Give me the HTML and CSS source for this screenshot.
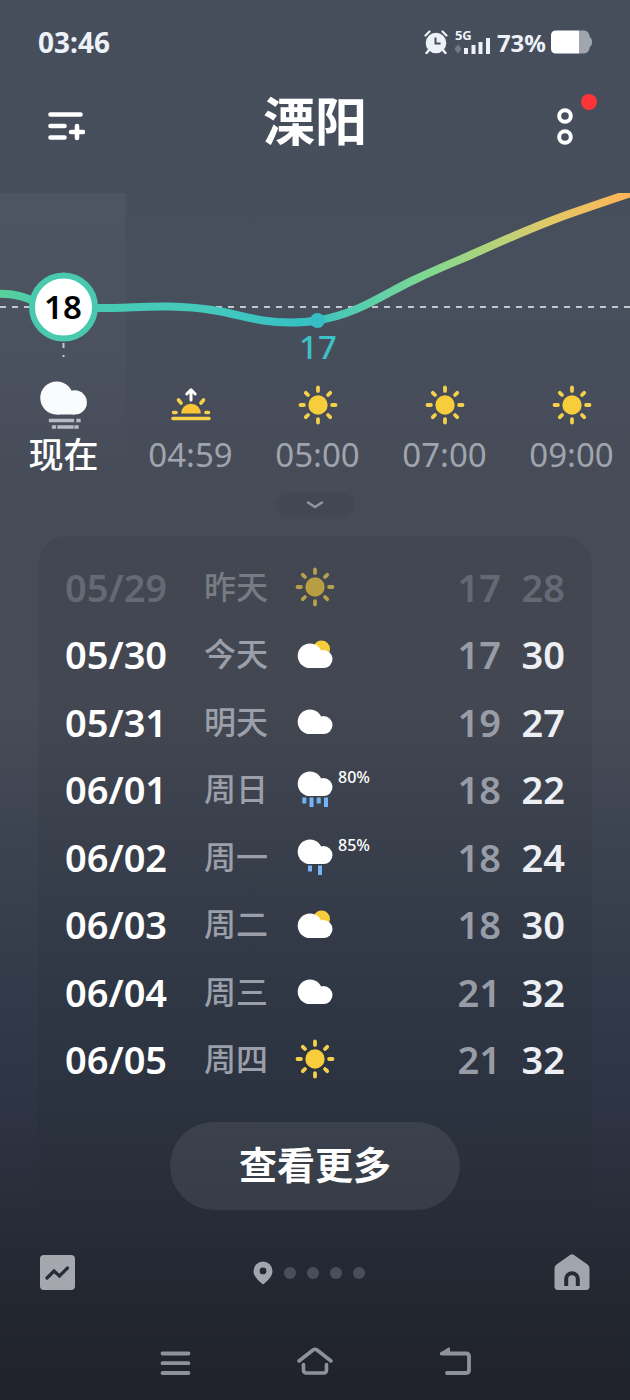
FILE: index.html
```html
<!DOCTYPE html>
<html lang="zh-CN">
<head>
<meta charset="utf-8">
<meta name="viewport" content="width=device-width, initial-scale=1">
<title>溧阳</title>
<link rel="stylesheet" href="styles.css">
</head>
<body>
<svg class="defs" aria-hidden="true">
  <symbol id="cloud" viewBox="0 0 36 25" overflow="visible">
    <circle cx="12.500" cy="12.300" r="12.300"/>
    <circle cx="26" cy="15.600" r="9"/>
    <path d="M12.500 10H24V12L26 24.600H12.500z"/>
  </symbol>
  <symbol id="sun" viewBox="0 0 40 40">
    <circle cx="20" cy="20" r="9.700" fill="#f7cd3c"/>
    <g stroke="#f5d04a" stroke-width="3.800" stroke-linecap="round">
      <path d="M20 2.500v3.400M20 34.100v3.400M2.500 20h3.400M34.100 20h3.400M7.800 7.800l2.200 2.200M30 30l2.200 2.200M7.800 32.200l2.200-2.200M30 10l2.200-2.200"/>
    </g>
  </symbol>
</svg>

<div class="screen">
  <div class="status">
    <time class="clock">03:46</time>
    <div class="indicators">
      <svg width="24" height="24" viewBox="0 0 24 24">
        <circle cx="12" cy="13" r="10.300" fill="#edf1f8"/>
        <path d="M1.500 5.500l4-4M22.500 5.500l-4-4" stroke="#edf1f8" stroke-width="2.200" stroke-linecap="round"/>
        <path d="M5 20l-2.500 3M19 20l2.500 3" stroke="#edf1f8" stroke-width="2.500" stroke-linecap="round"/>
        <path d="M11.500 7.500v6h5" fill="none" stroke="#464e5c" stroke-width="2"/>
      </svg>
      <div class="cell">
        <span class="net">5G</span>
        <svg width="36" height="24" viewBox="0 0 36 24">
          <path d="M0 18l3-3.500 3 3.500v2l-3 3.500-3-3.500z" fill="#747b88"/>
          <path d="M9 18h4v6H9zM16.500 15h4v9h-4zM23.500 12h4v12h-4zM31 8h4v16h-4z" fill="#edf1f8"/>
        </svg>
      </div>
      <span class="percent">73%</span>
      <svg width="42" height="24" viewBox="0 0 42 24">
        <path d="M28 .5h5q5 0 6 7 2 .5 2 4.500t-2 4.500q-1 7-6 7h-5z" fill="#a1a6ae"/>
        <path d="M5 .5h23v23H5q-5 0-5-5v-13q0-5 5-5z" fill="#fff"/>
      </svg>
    </div>
  </div>

  <header class="header">
    <button class="icon-button" type="button" aria-label="城市管理">
      <svg width="40" height="32" viewBox="0 0 40 32">
        <path d="M5.500 3.500h30M5.500 15h14M5.500 26.500h14M26 21h12M32 15v12" fill="none" stroke="#fff" stroke-width="4.600" stroke-linecap="round"/>
      </svg>
    </button>
    <h1 class="city">溧阳</h1>
    <button class="icon-button more" type="button" aria-label="更多选项">
      <svg width="18" height="40" viewBox="0 0 18 40" fill="none" stroke="#fff" stroke-width="4">
        <circle cx="9" cy="9" r="5.800"/><circle cx="9" cy="30" r="5.800"/>
      </svg>
      <span class="dot"></span>
    </button>
  </header>

  <main>
    <section class="hourly" aria-label="逐小时预报">
      <svg class="chart" viewBox="0 0 630 176" preserveAspectRatio="xMinYMin slice">
        <defs>
          <linearGradient id="temp" gradientUnits="userSpaceOnUse" x1="0" y1="0" x2="630" y2="0">
            <stop offset="0" stop-color="#58d09a"/>
            <stop offset=".08" stop-color="#49cbb2"/>
            <stop offset=".33" stop-color="#44c9bb"/>
            <stop offset=".48" stop-color="#35c0c4"/>
            <stop offset=".6" stop-color="#61d1a7"/>
            <stop offset=".68" stop-color="#80d890"/>
            <stop offset=".8" stop-color="#bdd277"/>
            <stop offset=".88" stop-color="#e4c866"/>
            <stop offset="1" stop-color="#ffb357"/>
          </linearGradient>
        </defs>
        <path class="dash" d="M0 114H630"/>
        <path class="dash" d="M63.500 150v5M63.500 162v2"/>
        <path d="M-5 101C15 100 25 104 38 110C60 118 80 115 97 115C130 115 140 113 170 113.500C235 115 245 129.500 290 129.500C300 129.500 308 129 317 127.500C359 121 385 100 415 86.500C435 77 445 73 465 64.500C482 57 495 51 515 42.500C535 34 550 28 565 22.500C595 12 610 7 640 -3" fill="none" stroke="url(#temp)" stroke-width="8"/>
        <circle cx="317.500" cy="127.500" r="7.500" fill="#35bfc5"/>
        <circle cx="63.500" cy="114" r="31.500" fill="#fff" stroke="#49c9ae" stroke-width="6"/>
        <text class="now-temp" x="63" y="126">18</text>
        <text class="low-temp" x="318" y="166">17</text>
      </svg>
      <ol class="hours">
        <li class="hour now">
          <svg width="48" height="48" viewBox="0 0 48 48">
            <g fill="#fafbfc" transform="translate(0 .5) scale(1.340)"><use href="#cloud" width="36" height="25"/></g>
            <path d="M10.500 39.500h22M38 39.500h1M13.500 46h1M19 46h13M36 46h1" stroke="#b6bac2" stroke-width="3.300" stroke-linecap="square"/>
          </svg>
          <span>现在</span>
        </li>
        <li class="hour">
          <svg width="48" height="48" viewBox="0 0 48 48">
            <path d="M14.200 32.500a9.800 9.800 0 0 1 19.600 0z" fill="#f9c536"/>
            <path d="M6 37.500h36M6.500 31.500h2.500M39 31.500h2.500M11.500 19l2.500 3M36.500 19l-2.500 3" stroke="#f5d04a" stroke-width="3.600" stroke-linecap="round"/>
            <path d="M24 19V9.500M19.800 13L24 8.800l4.200 4.200" fill="none" stroke="#fff" stroke-width="3" stroke-linecap="round" stroke-linejoin="round"/>
          </svg>
          <span>04:59</span>
        </li>
        <li class="hour"><svg width="48" height="48" viewBox="0 0 48 48"><use href="#sun" x="4" y="4" width="40" height="40"/></svg><span>05:00</span></li>
        <li class="hour"><svg width="48" height="48" viewBox="0 0 48 48"><use href="#sun" x="4" y="4" width="40" height="40"/></svg><span>07:00</span></li>
        <li class="hour"><svg width="48" height="48" viewBox="0 0 48 48"><use href="#sun" x="4" y="4" width="40" height="40"/></svg><span>09:00</span></li>
      </ol>
    </section>

    <button class="expand" type="button" aria-label="展开">
      <svg width="18" height="10" viewBox="0 0 18 10"><path d="M2 2.500l7 4.500L16 2.500" fill="none" stroke="#90949b" stroke-width="2.600" stroke-linecap="round"/></svg>
    </button>

    <section class="card" aria-label="每日预报">
      <table class="daily">
        <tbody>
          <tr class="past"><th scope="row">05/29</th><td class="day">昨天</td><td class="sky"><div><svg width="40" height="48" viewBox="0 0 40 48"><use href="#sun" y="4" width="40" height="40"/></svg></div></td><td class="low">17</td><td class="high">28</td></tr>
          <tr><th scope="row">05/30</th><td class="day">今天</td><td class="sky"><div><svg width="40" height="48" viewBox="0 0 40 48"><circle cx="26.500" cy="19" r="8.500" fill="#f7cd3c"/><use href="#cloud" x="2.500" y="13.500" width="36" height="25" fill="#fff"/></svg></div></td><td class="low">17</td><td class="high">30</td></tr>
          <tr><th scope="row">05/31</th><td class="day">明天</td><td class="sky"><div><svg width="40" height="48" viewBox="0 0 40 48"><use href="#cloud" x="2.500" y="11.500" width="36" height="25" fill="#fff"/></svg></div></td><td class="low">19</td><td class="high">27</td></tr>
          <tr><th scope="row">06/01</th><td class="day">周日</td><td class="sky"><div><svg width="40" height="48" viewBox="0 0 40 48"><use href="#cloud" x="2.500" y="6.500" width="36" height="25" fill="#fff"/><path d="M9.300 32.500v6M16.500 32.500v9.500M23.700 32.500v6M31 32.500v9.500" stroke="#74b4f6" stroke-width="4"/></svg><span class="chance">80%</span></div></td><td class="low">18</td><td class="high">22</td></tr>
          <tr><th scope="row">06/02</th><td class="day">周一</td><td class="sky"><div><svg width="40" height="48" viewBox="0 0 40 48"><use href="#cloud" x="2.500" y="6.500" width="36" height="25" fill="#fff"/><path d="M15 32.500v6M25 32.500v9.500" stroke="#74b4f6" stroke-width="4"/></svg><span class="chance">85%</span></div></td><td class="low">18</td><td class="high">24</td></tr>
          <tr><th scope="row">06/03</th><td class="day">周二</td><td class="sky"><div><svg width="40" height="48" viewBox="0 0 40 48"><circle cx="26.500" cy="19" r="8.500" fill="#f7cd3c"/><use href="#cloud" x="2.500" y="13.500" width="36" height="25" fill="#fff"/></svg></div></td><td class="low">18</td><td class="high">30</td></tr>
          <tr><th scope="row">06/04</th><td class="day">周三</td><td class="sky"><div><svg width="40" height="48" viewBox="0 0 40 48"><use href="#cloud" x="2.500" y="11.500" width="36" height="25" fill="#fff"/></svg></div></td><td class="low">21</td><td class="high">32</td></tr>
          <tr><th scope="row">06/05</th><td class="day">周四</td><td class="sky"><div><svg width="40" height="48" viewBox="0 0 40 48"><use href="#sun" y="4" width="40" height="40"/></svg></div></td><td class="low">21</td><td class="high">32</td></tr>
        </tbody>
      </table>
      <button class="view-more" type="button">查看更多</button>
    </section>
  </main>

  <footer class="footer">
    <button class="icon-button" type="button" aria-label="趋势">
      <svg width="36" height="36" viewBox="0 0 36 36"><rect width="35" height="35" rx="4" fill="#a4a8ae"/><path d="M7 23l7-7 5.500 5L27.500 13" fill="none" stroke="#272c37" stroke-width="3.200" stroke-linecap="round"/></svg>
    </button>
    <div class="pager" aria-label="城市分页">
      <svg width="20" height="24" viewBox="0 0 20 24"><path fill-rule="evenodd" d="M10 .5A9.500 9.500 0 0 1 19.500 10c0 5-4.500 9.500-9.500 13.500C5 19.500.5 15 .5 10A9.500 9.500 0 0 1 10 .5zM10 6.500a3.400 3.400 0 1 0 0 6.800a3.400 3.400 0 0 0 0-6.800z" fill="#a1a5ad"/></svg>
      <i></i><i></i><i></i><i></i>
    </div>
    <button class="icon-button" type="button" aria-label="主页">
      <svg width="36" height="38" viewBox="0 0 36 38"><path d="M16 1q2-1.500 4 0L33.500 10.500q2 1.500 2 3.500V32.500q0 3.500-3.500 3.500H4Q.5 36 .5 32.500V14q0-2 2-3.500z" fill="#a1a5ad"/><path d="M12.200 32v-7a5.800 5.800 0 0 1 11.600 0v7" fill="none" stroke="#272b35" stroke-width="4"/></svg>
    </button>
  </footer>

  <nav class="system" aria-label="系统导航">
    <button class="icon-button" type="button" aria-label="最近任务"><svg width="40" height="32" viewBox="0 0 40 32"><path d="M7.500 6.500h26M7.500 16.200h26M7.500 26h26" stroke="#8e929a" stroke-width="3.800" stroke-linecap="round"/></svg></button>
    <button class="icon-button" type="button" aria-label="主屏幕"><svg width="40" height="32" viewBox="0 0 40 32"><path d="M4 14L18 3q2-1.500 4 0l14 11M8.500 17.500v5.500q0 3 3 3h17q3 0 3-3v-5.500" fill="none" stroke="#8e929a" stroke-width="3.600" stroke-linecap="round"/></svg></button>
    <button class="icon-button" type="button" aria-label="返回"><svg width="40" height="32" viewBox="0 0 40 32"><path d="M7 6.500h24q3 0 3 3V23q0 3-3 3H12" fill="none" stroke="#8e929a" stroke-width="3.800" stroke-linecap="round"/><path d="M5 6L13.500.5q1.500-.5 1.500 1V8H5z" fill="#8e929a"/></svg></button>
  </nav>
</div>
</body>
</html>
```

FILE: styles.css
```css
* {
  box-sizing: border-box;
}

body {
  margin: 0;
  min-height: 100vh;
  color: #fff;
  font-family: "Noto Sans", "Noto Sans CJK SC", sans-serif;
  background: linear-gradient(#464e5c 0, #474e5c 22%, #464b57 36%, #484c58 50%, #3c4350 60%, #333a49 70%, #2d3342 80%, #252933 90%, #1f222a 100%);
}

svg {
  display: block;
  flex: none;
}

button {
  padding: 0;
  border: 0;
  background: none;
  color: inherit;
  font: inherit;
}

.defs {
  position: absolute;
  width: 0;
  height: 0;
}

.screen {
  display: flex;
  flex-direction: column;
  min-height: 100vh;
  overflow: hidden;
}

.status {
  display: flex;
  align-items: center;
  justify-content: space-between;
  height: 84px;
  padding: 0 37px 0 38px;
  color: #edf1f8;
  font-weight: 700;
}

.clock {
  font-size: 28px;
}

.indicators {
  display: flex;
  align-items: center;
}

.cell {
  display: grid;
  margin: 0 6px 0 7px;
}

.cell > * {
  grid-area: 1 / 1;
}

.net {
  font-size: 13px;
  line-height: 11px;
}

.percent {
  margin-right: 5px;
  font-size: 24px;
}

.header {
  display: flex;
  align-items: center;
  justify-content: space-between;
  height: 86px;
  padding: 0 41px;
}

.icon-button {
  display: grid;
  place-items: center;
  width: 48px;
  height: 48px;
}

.city {
  margin: 0 0 12px;
  font-size: 52px;
  line-height: 60px;
  font-weight: 700;
}

.more {
  position: relative;
}

.dot {
  position: absolute;
  top: -9px;
  right: -8px;
  width: 16px;
  height: 16px;
  border-radius: 50%;
  background: #ff3438;
}

.hourly {
  margin-top: 23px;
  background: linear-gradient(rgba(255, 255, 255, .04), rgba(255, 255, 255, .02) 60%, rgba(255, 255, 255, 0)) no-repeat 0 0 / 126px 100%;
}

.chart {
  width: 100%;
  height: 176px;
}

.dash {
  fill: none;
  stroke: #c3c7cf;
  stroke-width: 2;
  stroke-dasharray: 6 6;
}

.now-temp,
.low-temp {
  font-size: 33px;
  font-weight: 600;
  text-anchor: middle;
}

.low-temp {
  fill: #3cc1c4;
  font-weight: 500;
}

.hours {
  display: flex;
  margin: 0;
  padding: 12px 0 0;
  list-style: none;
}

.hour {
  display: flex;
  flex: 0 0 127px;
  flex-direction: column;
  align-items: center;
  color: #a0a4ac;
  font-size: 33px;
  line-height: 52px;
}

.now {
  color: #fff;
  font-size: 35px;
  font-weight: 500;
}

.expand {
  display: grid;
  place-items: center;
  width: 78px;
  height: 24px;
  margin: 12px auto 19px;
  border-radius: 12px;
  background: rgba(50, 50, 55, .12);
}

.card {
  margin: 0 38px;
  padding: 17px 27px 20px;
  border-radius: 28px;
  background: linear-gradient(rgba(40, 42, 46, .14), rgba(36, 42, 46, .14) 60%, rgba(36, 46, 50, .25) 90%, rgba(36, 42, 46, .15));
}

.daily {
  width: 100%;
  height: 540px;
  border-collapse: collapse;
  table-layout: fixed;
  font-size: 38px;
  line-height: 48px;
  font-weight: 600;
}

.daily th,
.daily td {
  padding: 0;
}

.daily th {
  width: 139px;
  text-align: left;
  font-weight: 600;
}

.daily .day {
  width: 91px;
  color: #9b9fa9;
  font-size: 32px;
  font-weight: 500;
}

.sky > div {
  display: flex;
  gap: 3px;
}

.chance {
  font-size: 16px;
  line-height: 24px;
  font-weight: 500;
}

.low,
.high {
  width: 64px;
  color: #eceff4;
  text-align: right;
}

.daily .low {
  color: #989ca6;
}

.daily .past > * {
  color: #646973;
}

.daily .past .day {
  color: #777b84;
}

.past svg {
  opacity: .65;
}

.view-more {
  display: block;
  width: 290px;
  height: 88px;
  margin: 29px auto 0;
  padding-bottom: 8px;
  border-radius: 44px;
  background: rgba(255, 255, 255, .08);
  font-size: 38px;
  font-weight: 700;
}

.footer {
  display: flex;
  align-items: center;
  justify-content: space-between;
  height: 86px;
  padding: 0 34px;
}

.pager {
  display: flex;
  align-items: center;
  gap: 11px;
  padding-right: 12px;
}

.pager i {
  width: 12px;
  height: 12px;
  border-radius: 50%;
  background: #4a4e58;
}

.system {
  display: flex;
  align-items: center;
  justify-content: center;
  gap: 92px;
  height: 84px;
  padding-top: 10px;
}
```
